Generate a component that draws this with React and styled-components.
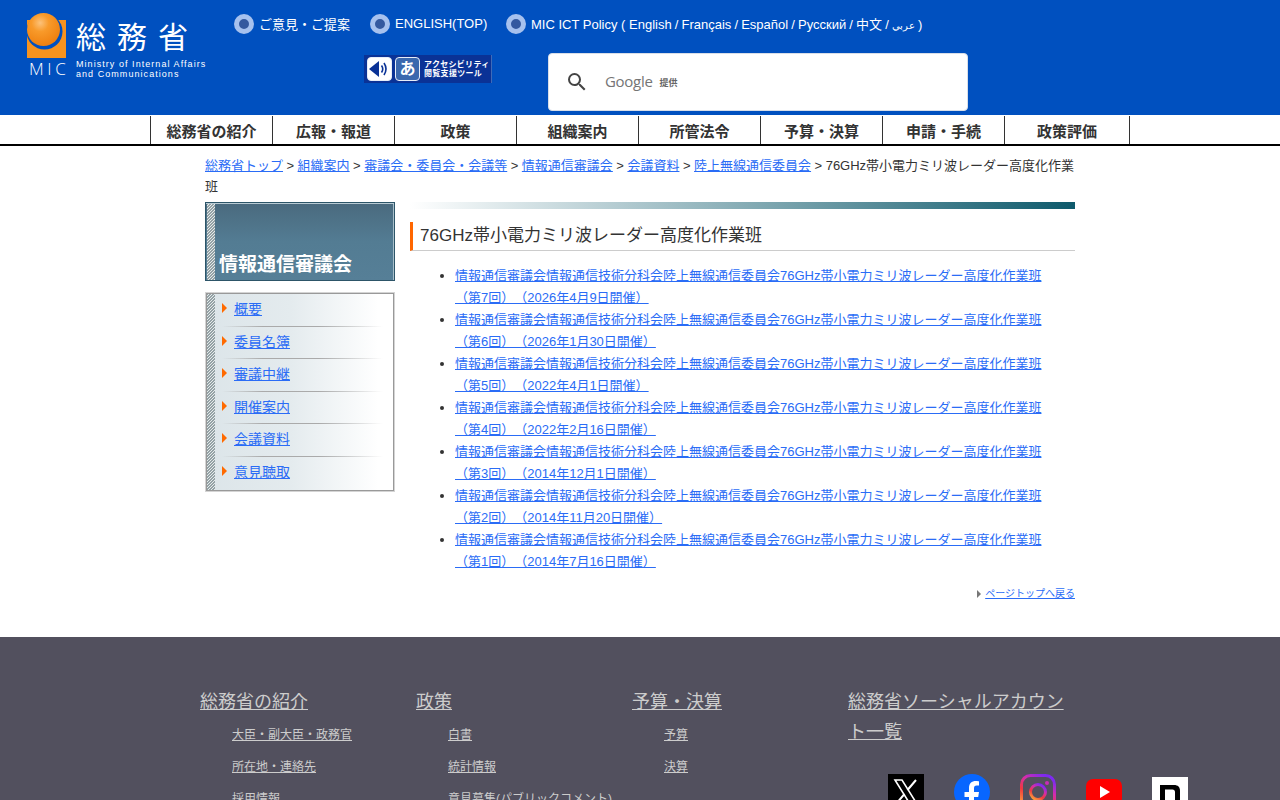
import styled, { createGlobalStyle } from 'styled-components';

const GlobalStyle = createGlobalStyle`
  html, body {
    margin: 0;
    padding: 0;
    background: #fff;
    color: #333;
    font-family: "Liberation Sans", "Noto Sans CJK JP", sans-serif;
    font-size: 13px;
    text-spacing-trim: space-all;
  }
  a { color: #2a6cf6; }
`;

const hatch = 'repeating-linear-gradient(135deg, #94a2a6 0 1.06px, #e6ebeb 1.06px 2.12px)';

const Header = styled.header`
  height: 115px;
  background: #0050bf;
  display: flex;
  color: #fff;
`;

const LogoWrap = styled.a`
  display: grid;
  grid-template-columns: 40px auto;
  column-gap: 9px;
  width: 180px;
  margin: 13px 0 0 27px;
  height: 66px;
  color: #fff;
  text-decoration: none;
`;

const LogoName = styled.div`
  font-size: 30px;
  line-height: 50px;
  height: 46px;
  letter-spacing: 11px;
  white-space: nowrap;
`;

const LogoMic = styled.div`
  font-family: "Open Sans", sans-serif;
  font-weight: 300;
  font-size: 17px;
  line-height: 20px;
  letter-spacing: 3.6px;
  white-space: nowrap;
  margin-left: 2px;
`;

const LogoEn = styled.div`
  font-size: 9px;
  line-height: 10px;
  letter-spacing: 1.05px;
  white-space: nowrap;
`;

const HeaderRight = styled.div`
  margin-left: 27px;
  flex: 1;
  padding-top: 14px;
`;

const TopLinks = styled.div`
  display: flex;
  align-items: center;
  height: 20px;
`;

const TopLink = styled.a`
  display: flex;
  align-items: center;
  gap: 5px;
  color: #fff;
  text-decoration: none;
  width: ${(p) => p.$w || 'auto'};
  white-space: nowrap;
`;

const TopLabel = styled.span`
  padding-bottom: 2px;
`;

const LangList = styled.span`
  word-spacing: -0.5px;
`;

const ArabicLabel = styled.span`
  font-size: 10px;
`;

const Radio = styled.span`
  box-sizing: border-box;
  width: 20px;
  height: 20px;
  border-radius: 50%;
  border: 5px solid #a6c1ee;
  background: #34599f;
  flex: none;
`;

const ToolRow = styled.div`
  display: flex;
  margin-top: 19px;
`;

const AccessBadge = styled.a`
  box-sizing: border-box;
  width: 128px;
  height: 28px;
  margin: 2px 0 0 130px;
  background: #0a3296;
  border-right: 1px solid #3f6ab8;
  display: flex;
  align-items: center;
  gap: 3px;
  padding-left: 3px;
  color: #fff;
  text-decoration: none;
`;

const BadgeIcon = styled.span`
  box-sizing: border-box;
  width: 25px;
  height: 24px;
  border-radius: 4px;
  background: ${(p) => p.$bg || '#fff'};
  border: 1px solid #e6edf8;
  display: flex;
  align-items: center;
  justify-content: center;
  color: #fff;
  font-size: 16px;
  font-weight: 700;
  line-height: 1;
`;

const BadgeText = styled.span`
  font-size: 8px;
  font-weight: 700;
  letter-spacing: 0.3px;
  line-height: 9.5px;
  white-space: nowrap;
  margin-left: 1px;
`;

const SearchBox = styled.div`
  box-sizing: border-box;
  width: 420px;
  height: 58px;
  margin-left: 56px;
  background: #fff;
  border: 1px solid #d8dee8;
  border-radius: 4px;
  display: flex;
  align-items: center;
  padding-left: 16px;
  color: #333;
`;

const GoogleMark = styled.span`
  font-family: "Open Sans", sans-serif;
  font-size: 15px;
  line-height: 18px;
  padding-bottom: 2px;
  color: #757575;
  margin-left: 16px;
  letter-spacing: -0.3px;
`;

const Powered = styled.span`
  font-size: 9px;
  font-weight: 700;
  color: #666;
  margin-left: 7px;
`;

const Nav = styled.nav`
  height: 28px;
  padding-top: 1px;
  border-bottom: 2px solid #000;
  display: flex;
  justify-content: center;
  background: #fff;
`;

const NavItem = styled.a`
  box-sizing: border-box;
  width: 122px;
  border-left: 1px solid #333;
  color: #333;
  font-size: 15px;
  font-weight: 700;
  line-height: 31px;
  text-align: center;
  text-decoration: none;
  white-space: nowrap;
  &:last-child {
    width: 126px;
    border-right: 1px solid #333;
  }
`;

const Wrapper = styled.div`
  width: 870px;
  margin: 0 auto;
  height: 491px;
`;

const Breadcrumb = styled.div`
  padding-top: 9px;
  line-height: 21px;
  height: 47px;
  word-spacing: -0.12px;
`;

const Columns = styled.div`
  display: flex;
  gap: 15px;
`;

const Side = styled.aside`
  width: 190px;
  flex: none;
`;

const SideTitle = styled.div`
  box-sizing: border-box;
  height: 79px;
  border: 1px solid #2d5568;
  box-shadow: inset 0 1px 0 #b9cbd4, inset -1px 0 0 #a9bfca;
  background: linear-gradient(#4a6a7e, #537c93 50%, #567f97);
  display: flex;
  align-items: flex-end;
  position: relative;
  color: #fff;
  font-size: 19px;
  font-weight: 700;
  line-height: 24px;
  padding: 0 0 3px 13px;
  &::before {
    content: '';
    position: absolute;
    left: 1px;
    top: 1px;
    bottom: 0;
    width: 8px;
    background: ${hatch};
  }
`;

const SideMenu = styled.ul`
  box-sizing: border-box;
  list-style: none;
  margin: 12px 1px 0;
  width: 188px;
  height: 198px;
  padding: 0 0 0 15px;
  border: 1px solid #999;
  box-shadow: 0 0 0 1px #d4d4d4;
  position: relative;
  background: linear-gradient(90deg, #dce5e9, #e4ebee 45%, #fff 92%);
  &::before {
    content: '';
    position: absolute;
    left: 0;
    top: 0;
    bottom: 0;
    width: 8px;
    background: ${hatch};
  }
`;

const SideItem = styled.li`
  height: 32.5px;
  box-sizing: border-box;
  padding-bottom: 4px;
  display: flex;
  align-items: center;
  gap: 7px;
  font-size: 14px;
  position: relative;
  &:not(:last-child)::after {
    content: '';
    position: absolute;
    left: 0;
    right: 10px;
    bottom: 0;
    height: 1px;
    background: linear-gradient(90deg, transparent, #aaa 25%, #aaa 60%, transparent);
  }
`;

const Arrow = styled.span`
  width: 0;
  height: 0;
  border-left: 5px solid #ff6a00;
  border-top: 5px solid transparent;
  border-bottom: 5px solid transparent;
`;

const Content = styled.main`
  flex: 1;
  min-width: 0;
`;

const TopBar = styled.div`
  height: 7px;
  background: linear-gradient(90deg, #fff, #0e5a6c);
`;

const Title = styled.h1`
  margin: 13px 0 0;
  box-sizing: border-box;
  height: 29px;
  padding-left: 7px;
  border-left: 3px solid #ff6600;
  border-bottom: 1px solid #ccc;
  font-size: 17px;
  font-weight: 400;
  line-height: 28px;
  color: #333;
`;

const MeetingList = styled.ul`
  margin: 14px 0 0;
  padding: 0 0 0 45px;
  line-height: 22px;
`;

const PageTop = styled.div`
  margin-top: 11px;
  display: flex;
  justify-content: flex-end;
  align-items: center;
  gap: 4px;
  font-size: 10px;
  line-height: 20px;
  &::before {
    content: '';
    border-left: 4px solid #777;
    border-top: 4px solid transparent;
    border-bottom: 4px solid transparent;
  }
`;

const Footer = styled.footer`
  background: #52505e;
  padding: 51px 0 0 200px;
  display: grid;
  grid-template-columns: repeat(4, 216px);
  height: 112px;
  overflow: hidden;
`;

const FooterCol = styled.div`
  line-height: 29px;
`;

const FooterHead = styled.a`
  font-size: 18px;
  color: #ccc;
`;

const FooterLinks = styled.ul`
  list-style: none;
  margin: 1px 0 0;
  padding: 0 0 0 32px;
`;

const FooterLink = styled.li`
  font-size: 12px;
  line-height: 32px;
  white-space: nowrap;
  a { color: #ccc; }
`;

const Social = styled.div`
  display: flex;
  gap: 30px;
  margin: 26px 0 0 40px;
  width: 340px;
`;

const SocialIcon = styled.a`
  width: 36px;
  height: 36px;
  flex: none;
  display: block;
`;

const meetings = [
  '（第7回）（2026年4月9日開催）',
  '（第6回）（2026年1月30日開催）',
  '（第5回）（2022年4月1日開催）',
  '（第4回）（2022年2月16日開催）',
  '（第3回）（2014年12月1日開催）',
  '（第2回）（2014年11月20日開催）',
  '（第1回）（2014年7月16日開催）',
];
const navItems = ['総務省の紹介', '広報・報道', '政策', '組織案内', '所管法令', '予算・決算', '申請・手続', '政策評価'];
const sideItems = ['概要', '委員名簿', '審議中継', '開催案内', '会議資料', '意見聴取'];
const crumbs = ['総務省トップ', '組織案内', '審議会・委員会・会議等', '情報通信審議会', '会議資料', '陸上無線通信委員会'];
const footerCols = [
  { head: '総務省の紹介', links: ['大臣・副大臣・政務官', '所在地・連絡先', '採用情報'] },
  { head: '政策', links: ['白書', '統計情報', '意見募集(パブリックコメント)'] },
  { head: '予算・決算', links: ['予算', '決算'] },
];

function LogoMark() {
  return (
    <svg width="40" height="46" viewBox="0 0 40 46">
      <defs>
        <radialGradient id="ball" cx="0.4" cy="0.3" r="0.75">
          <stop offset="0" stopColor="#fcc27a" />
          <stop offset="0.35" stopColor="#f89a2a" />
          <stop offset="1" stopColor="#ee7d0c" />
        </radialGradient>
      </defs>
      <rect x="0" y="7" width="39" height="38" fill="#f7931e" />
      <circle cx="17.5" cy="18.5" r="18" fill="#0050bf" />
      <circle cx="16.5" cy="16.5" r="16.5" fill="url(#ball)" />
    </svg>
  );
}

function SearchGlyph() {
  return (
    <svg width="24" height="24" viewBox="0 0 24 24" fill="#444">
      <path d="M15.5 14h-.79l-.28-.27A6.471 6.471 0 0 0 16 9.5 6.5 6.5 0 1 0 9.5 16c1.61 0 3.09-.59 4.23-1.57l.27.28v.79l5 4.99L20.49 19l-4.99-5zm-6 0C7.01 14 5 11.99 5 9.5S7.01 5 9.5 5 14 7.01 14 9.5 11.99 14 9.5 14z" />
    </svg>
  );
}

function SpeakerIcon() {
  return (
    <svg width="23" height="22" viewBox="0 0 23 22">
      <path d="M1 11 L11 3 V19 Z" fill="#0a3296" />
      <path d="M13.5 7.5 Q16 11 13.5 14.5 M16 5 Q20 11 16 17" fill="none" stroke="#0a3296" strokeWidth="1.6" />
    </svg>
  );
}

function XIcon() {
  return (
    <svg width="36" height="36" viewBox="0 0 36 36">
      <rect width="36" height="36" fill="#000" />
      <path d="M7 6 H14 L29 30 H22 Z" fill="none" stroke="#fff" strokeWidth="1.6" />
      <path d="M28 6 L19.5 16 M16.5 20 L8 30" stroke="#fff" strokeWidth="2" />
    </svg>
  );
}

function FacebookIcon() {
  return (
    <svg width="36" height="36" viewBox="0 0 36 36">
      <circle cx="18" cy="18" r="18" fill="#0866ff" />
      <path d="M15 36 V23 H10.5 V18 H15 V14 C15 9.5 17.5 7 22 7 C23.5 7 25 7.3 25 7.3 V11.5 H22.8 C20.6 11.5 20 12.8 20 14.3 V18 H25 L24.2 23 H20 V36 Z" fill="#fff" />
    </svg>
  );
}

function InstagramIcon() {
  return (
    <svg width="36" height="36" viewBox="0 0 36 36">
      <defs>
        <linearGradient id="ig" x1="0.1" y1="1" x2="0.7" y2="0">
          <stop offset="0" stopColor="#fdb13a" />
          <stop offset="0.4" stopColor="#f0393f" />
          <stop offset="0.7" stopColor="#d42dab" />
          <stop offset="1" stopColor="#7d2af0" />
        </linearGradient>
      </defs>
      <rect x="1.5" y="1.5" width="33" height="33" rx="9" fill="none" stroke="url(#ig)" strokeWidth="3" />
      <circle cx="18" cy="18" r="7.5" fill="none" stroke="url(#ig)" strokeWidth="3" />
      <circle cx="27" cy="9" r="2" fill="#c92bb8" />
    </svg>
  );
}

function YoutubeIcon() {
  return (
    <svg width="36" height="36" viewBox="0 0 36 36">
      <rect x="0" y="5" width="36" height="26" rx="7" fill="#ff0000" />
      <path d="M14 12 L24 18 L14 24 Z" fill="#fff" />
    </svg>
  );
}

function NoteIcon() {
  return (
    <svg width="36" height="36" viewBox="0 0 36 36">
      <rect y="3" width="36" height="33" fill="#fff" />
      <path d="M8 32 V11 H22 C26 11 28 13 28 17 V32 H23 V18 C23 16.5 22 15.5 20.5 15.5 H13 V32 Z" fill="#000" />
    </svg>
  );
}

export default function App() {
  return (
    <>
      <GlobalStyle />
      <Header>
        <LogoWrap href="#">
          <LogoMark />
          <LogoName>総務省</LogoName>
          <LogoMic>MIC</LogoMic>
          <LogoEn>
            Ministry of Internal Affairs
            <br />
            and Communications
          </LogoEn>
        </LogoWrap>
        <HeaderRight>
          <TopLinks>
            <TopLink href="#" $w="136px">
              <Radio />
              <TopLabel>ご意見・ご提案</TopLabel>
            </TopLink>
            <TopLink href="#" $w="136px">
              <Radio />
              <TopLabel>ENGLISH(TOP)</TopLabel>
            </TopLink>
            <TopLink href="#">
              <Radio />
              <TopLabel>
                MIC ICT Policy ({' '}
                <LangList>
                  English / Français / Español / Русский / 中文 / <ArabicLabel>عربي</ArabicLabel> )
                </LangList>
              </TopLabel>
            </TopLink>
          </TopLinks>
          <ToolRow>
            <AccessBadge href="#">
              <BadgeIcon>
                <SpeakerIcon />
              </BadgeIcon>
              <BadgeIcon $bg="#3a68ae">あ</BadgeIcon>
              <BadgeText>
                アクセシビリティ
                <br />
                閲覧支援ツール
              </BadgeText>
            </AccessBadge>
            <SearchBox>
              <SearchGlyph />
              <GoogleMark>Google</GoogleMark>
              <Powered>提供</Powered>
            </SearchBox>
          </ToolRow>
        </HeaderRight>
      </Header>
      <Nav>
        {navItems.map((item) => (
          <NavItem key={item} href="#">
            {item}
          </NavItem>
        ))}
      </Nav>
      <Wrapper>
        <Breadcrumb>
          {crumbs.map((c) => (
            <span key={c}>
              <a href="#">{c}</a> &gt;{' '}
            </span>
          ))}
          76GHz帯小電力ミリ波レーダー高度化作業班
        </Breadcrumb>
        <Columns>
          <Side>
            <SideTitle>情報通信審議会</SideTitle>
            <SideMenu>
              {sideItems.map((item) => (
                <SideItem key={item}>
                  <Arrow />
                  <a href="#">{item}</a>
                </SideItem>
              ))}
            </SideMenu>
          </Side>
          <Content>
            <TopBar />
            <Title>76GHz帯小電力ミリ波レーダー高度化作業班</Title>
            <MeetingList>
              {meetings.map((m) => (
                <li key={m}>
                  <a href="#">
                    情報通信審議会情報通信技術分科会陸上無線通信委員会76GHz帯小電力ミリ波レーダー高度化作業班
                    <br />
                    {m}
                  </a>
                </li>
              ))}
            </MeetingList>
            <PageTop>
              <a href="#">ページトップへ戻る</a>
            </PageTop>
          </Content>
        </Columns>
      </Wrapper>
      <Footer>
        {footerCols.map((col) => (
          <FooterCol key={col.head}>
            <FooterHead href="#">{col.head}</FooterHead>
            <FooterLinks>
              {col.links.map((l) => (
                <FooterLink key={l}>
                  <a href="#">{l}</a>
                </FooterLink>
              ))}
            </FooterLinks>
          </FooterCol>
        ))}
        <FooterCol>
          <FooterHead href="#">総務省ソーシャルアカウント一覧</FooterHead>
          <Social>
            <SocialIcon href="#"><XIcon /></SocialIcon>
            <SocialIcon href="#"><FacebookIcon /></SocialIcon>
            <SocialIcon href="#"><InstagramIcon /></SocialIcon>
            <SocialIcon href="#"><YoutubeIcon /></SocialIcon>
            <SocialIcon href="#"><NoteIcon /></SocialIcon>
          </Social>
        </FooterCol>
      </Footer>
    </>
  );
}
